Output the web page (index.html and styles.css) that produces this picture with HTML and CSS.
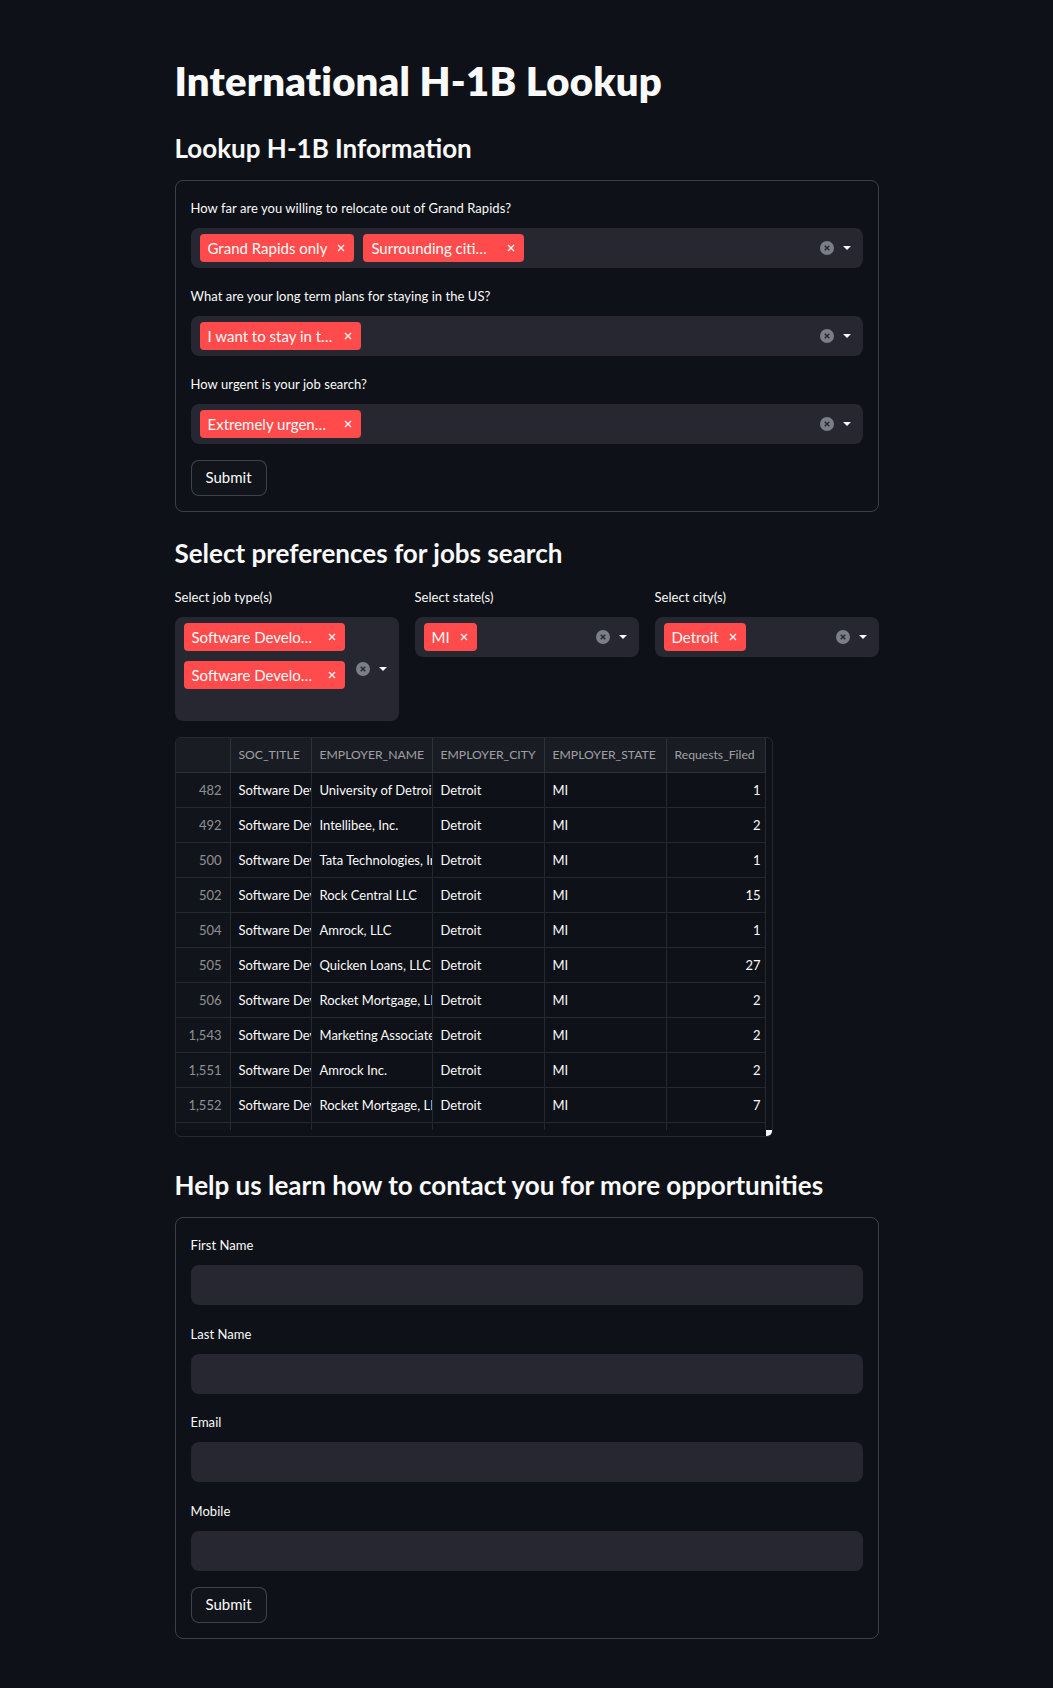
FILE: index.html
```html
<!DOCTYPE html>
<html lang="en">
<head>
<meta charset="utf-8">
<title>International H-1B Lookup</title>
<link rel="stylesheet" href="styles.css">
</head>
<body>
<main class="page">
  <h1 class="title">International H-1B Lookup</h1>

  <h3 class="subhead sh-lookup">Lookup H-1B Information</h3>
  <form class="st-form">
    <div class="field">
      <label class="field-label">How far are you willing to relocate out of Grand Rapids?</label>
      <div class="multiselect">
        <div class="ms-values">
          <span class="chip"><span class="chip-text">Grand Rapids only</span><svg class="chip-x" viewBox="0 0 8 8"><path d="M1 1L7 7M7 1L1 7"/></svg></span>
          <span class="chip"><span class="chip-text trunc">Surrounding citi…</span><svg class="chip-x" viewBox="0 0 8 8"><path d="M1 1L7 7M7 1L1 7"/></svg></span>
          <span class="ms-input"></span>
        </div>
        <div class="ms-indicators">
          <svg class="clear-icon" viewBox="0 0 14 14"><circle cx="7" cy="7" r="7"/><path d="M4.7 4.7L9.3 9.3M9.3 4.7L4.7 9.3"/></svg>
          <svg class="arrow-icon" viewBox="0 0 8 4"><path d="M0 0H8L4 4Z"/></svg>
        </div>
      </div>
    </div>
    <div class="field">
      <label class="field-label">What are your long term plans for staying in the US?</label>
      <div class="multiselect">
        <div class="ms-values">
          <span class="chip"><span class="chip-text trunc">I want to stay in t…</span><svg class="chip-x" viewBox="0 0 8 8"><path d="M1 1L7 7M7 1L1 7"/></svg></span>
          <span class="ms-input"></span>
        </div>
        <div class="ms-indicators">
          <svg class="clear-icon" viewBox="0 0 14 14"><circle cx="7" cy="7" r="7"/><path d="M4.7 4.7L9.3 9.3M9.3 4.7L4.7 9.3"/></svg>
          <svg class="arrow-icon" viewBox="0 0 8 4"><path d="M0 0H8L4 4Z"/></svg>
        </div>
      </div>
    </div>
    <div class="field">
      <label class="field-label">How urgent is your job search?</label>
      <div class="multiselect">
        <div class="ms-values">
          <span class="chip"><span class="chip-text trunc">Extremely urgen…</span><svg class="chip-x" viewBox="0 0 8 8"><path d="M1 1L7 7M7 1L1 7"/></svg></span>
          <span class="ms-input"></span>
        </div>
        <div class="ms-indicators">
          <svg class="clear-icon" viewBox="0 0 14 14"><circle cx="7" cy="7" r="7"/><path d="M4.7 4.7L9.3 9.3M9.3 4.7L4.7 9.3"/></svg>
          <svg class="arrow-icon" viewBox="0 0 8 4"><path d="M0 0H8L4 4Z"/></svg>
        </div>
      </div>
    </div>
    <button class="st-btn" type="button">Submit</button>
  </form>

  <h3 class="subhead sh-prefs">Select preferences for jobs search</h3>
  <div class="columns">
    <div class="field">
      <label class="field-label">Select job type(s)</label>
      <div class="multiselect">
        <div class="ms-values">
          <span class="chip"><span class="chip-text trunc">Software Develo…</span><svg class="chip-x" viewBox="0 0 8 8"><path d="M1 1L7 7M7 1L1 7"/></svg></span>
          <span class="chip"><span class="chip-text trunc">Software Develo…</span><svg class="chip-x" viewBox="0 0 8 8"><path d="M1 1L7 7M7 1L1 7"/></svg></span>
          <span class="ms-input"></span>
        </div>
        <div class="ms-indicators">
          <svg class="clear-icon" viewBox="0 0 14 14"><circle cx="7" cy="7" r="7"/><path d="M4.7 4.7L9.3 9.3M9.3 4.7L4.7 9.3"/></svg>
          <svg class="arrow-icon" viewBox="0 0 8 4"><path d="M0 0H8L4 4Z"/></svg>
        </div>
      </div>
    </div>
    <div class="field">
      <label class="field-label">Select state(s)</label>
      <div class="multiselect">
        <div class="ms-values">
          <span class="chip"><span class="chip-text">MI</span><svg class="chip-x" viewBox="0 0 8 8"><path d="M1 1L7 7M7 1L1 7"/></svg></span>
          <span class="ms-input"></span>
        </div>
        <div class="ms-indicators">
          <svg class="clear-icon" viewBox="0 0 14 14"><circle cx="7" cy="7" r="7"/><path d="M4.7 4.7L9.3 9.3M9.3 4.7L4.7 9.3"/></svg>
          <svg class="arrow-icon" viewBox="0 0 8 4"><path d="M0 0H8L4 4Z"/></svg>
        </div>
      </div>
    </div>
    <div class="field">
      <label class="field-label">Select city(s)</label>
      <div class="multiselect">
        <div class="ms-values">
          <span class="chip"><span class="chip-text">Detroit</span><svg class="chip-x" viewBox="0 0 8 8"><path d="M1 1L7 7M7 1L1 7"/></svg></span>
          <span class="ms-input"></span>
        </div>
        <div class="ms-indicators">
          <svg class="clear-icon" viewBox="0 0 14 14"><circle cx="7" cy="7" r="7"/><path d="M4.7 4.7L9.3 9.3M9.3 4.7L4.7 9.3"/></svg>
          <svg class="arrow-icon" viewBox="0 0 8 4"><path d="M0 0H8L4 4Z"/></svg>
        </div>
      </div>
    </div>
  </div>

  <div class="dataframe">
    <div class="df-viewport">
      <div class="df-grid">
        <div class="hd idx"></div><div class="hd">SOC_TITLE</div><div class="hd">EMPLOYER_NAME</div><div class="hd">EMPLOYER_CITY</div><div class="hd">EMPLOYER_STATE</div><div class="hd">Requests_Filed</div>

        <div class="cell idx">482</div><div class="cell">Software Developers</div><div class="cell">University of Detroit Mercy</div><div class="cell">Detroit</div><div class="cell">MI</div><div class="cell num">1</div>
        <div class="cell idx">492</div><div class="cell">Software Developers</div><div class="cell">Intellibee, Inc.</div><div class="cell">Detroit</div><div class="cell">MI</div><div class="cell num">2</div>
        <div class="cell idx">500</div><div class="cell">Software Developers</div><div class="cell">Tata Technologies, Inc.</div><div class="cell">Detroit</div><div class="cell">MI</div><div class="cell num">1</div>
        <div class="cell idx">502</div><div class="cell">Software Developers</div><div class="cell">Rock Central LLC</div><div class="cell">Detroit</div><div class="cell">MI</div><div class="cell num">15</div>
        <div class="cell idx">504</div><div class="cell">Software Developers</div><div class="cell">Amrock, LLC</div><div class="cell">Detroit</div><div class="cell">MI</div><div class="cell num">1</div>
        <div class="cell idx">505</div><div class="cell">Software Developers</div><div class="cell">Quicken Loans, LLC</div><div class="cell">Detroit</div><div class="cell">MI</div><div class="cell num">27</div>
        <div class="cell idx">506</div><div class="cell">Software Developers</div><div class="cell">Rocket Mortgage, LLC</div><div class="cell">Detroit</div><div class="cell">MI</div><div class="cell num">2</div>
        <div class="cell idx">1,543</div><div class="cell">Software Developers</div><div class="cell">Marketing Associates, LLC</div><div class="cell">Detroit</div><div class="cell">MI</div><div class="cell num">2</div>
        <div class="cell idx">1,551</div><div class="cell">Software Developers</div><div class="cell">Amrock Inc.</div><div class="cell">Detroit</div><div class="cell">MI</div><div class="cell num">2</div>
        <div class="cell idx">1,552</div><div class="cell">Software Developers</div><div class="cell">Rocket Mortgage, LLC</div><div class="cell">Detroit</div><div class="cell">MI</div><div class="cell num">7</div>
        <div class="cell idx"></div><div class="cell"></div><div class="cell"></div><div class="cell"></div><div class="cell"></div><div class="cell num"></div>
      </div>
    </div>
    <span class="df-resize"></span>
  </div>

  <h3 class="subhead sh-contact">Help us learn how to contact you for more opportunities</h3>
  <form class="st-form contact-form">
    <div class="field">
      <label class="field-label" for="fn">First Name</label>
      <input class="text-input" id="fn" type="text">
    </div>
    <div class="field">
      <label class="field-label" for="ln">Last Name</label>
      <input class="text-input" id="ln" type="text">
    </div>
    <div class="field">
      <label class="field-label" for="em">Email</label>
      <input class="text-input" id="em" type="text">
    </div>
    <div class="field">
      <label class="field-label" for="mo">Mobile</label>
      <input class="text-input" id="mo" type="text">
    </div>
    <button class="st-btn" type="button">Submit</button>
  </form>
</main>
</body>
</html>
```

FILE: styles.css
```css
* { box-sizing: border-box; }

html, body {
  margin: 0;
  padding: 0;
  background: #0e1117;
  color: #fafafa;
  font-family: "Lato", "Liberation Sans", sans-serif;
}

.page {
  width: 704px;
  margin: 0 auto;
  padding: 55px 0 40px;
}

.title {
  margin: 0;
  font-size: 40px;
  line-height: 52px;
  font-weight: 800;
  letter-spacing: 0.2px;
}

.subhead {
  margin: 0;
  font-size: 26px;
  line-height: 36px;
  font-weight: 700;
  letter-spacing: 0;
}

.sh-lookup { margin-top: 23px; margin-bottom: 14px; }
.sh-prefs { margin-top: 23px; margin-bottom: 14px; }
.sh-contact { margin-top: 30px; margin-bottom: 14px; }

.st-form {
  border: 1px solid rgba(250, 250, 250, 0.2);
  border-radius: 8px;
  padding: 15px;
  display: flex;
  flex-direction: column;
  gap: 16px;
  align-items: flex-start;
}

.contact-form { gap: 16.5px; }

.field {
  display: flex;
  flex-direction: column;
  gap: 8px;
  width: 100%;
}

.field-label {
  font-size: 13px;
  line-height: 24px;
  height: 24px;
  color: #fafafa;
  letter-spacing: 0.05px;
}

.multiselect {
  display: flex;
  align-items: center;
  background: #262730;
  border-radius: 8px;
  min-height: 40px;
}

.ms-values {
  flex: 1;
  min-width: 0;
  display: flex;
  flex-wrap: wrap;
  align-items: center;
  row-gap: 10px;
  column-gap: 9px;
  padding: 6px 0 6px 9px;
}

.chip {
  display: inline-flex;
  align-items: center;
  gap: 10px;
  height: 28px;
  padding: 0 9px 0 8px;
  background: #ff4b4b;
  border-radius: 4px;
  color: #fafafa;
  font-size: 15px;
  white-space: nowrap;
}

.chip-text.trunc {
  min-width: 126px;
}

.chip-x {
  width: 8px;
  height: 8px;
  fill: none;
  stroke: #fafafa;
  stroke-width: 1.3;
}

.ms-input {
  width: 2px;
  height: 16px;
}

.ms-indicators {
  display: flex;
  align-items: center;
  gap: 9px;
  padding: 0 12px 0 6px;
}

.clear-icon {
  width: 14px;
  height: 14px;
}
.clear-icon circle { fill: #7c7e87; }
.clear-icon path { stroke: #262730; stroke-width: 1.4; fill: none; }

.arrow-icon {
  width: 8px;
  height: 4px;
  fill: #fafafa;
}

.st-btn {
  font-family: inherit;
  font-size: 15px;
  line-height: 25.6px;
  color: #fafafa;
  background: #11141b;
  border: 1px solid rgba(250, 250, 250, 0.2);
  border-radius: 8px;
  padding: 4px 14px;
  height: 36px;
}

.columns {
  display: grid;
  grid-template-columns: repeat(3, 1fr);
  gap: 16px;
  align-items: start;
}

.dataframe {
  position: relative;
  margin-top: 16px;
  width: 598px;
  height: 400px;
  border: 1px solid rgba(250, 250, 250, 0.1);
  border-radius: 6px;
  padding: 0 6px 6px 0;
  overflow: hidden;
}

.df-viewport {
  height: 392px;
  overflow: hidden;
}

.df-grid {
  display: grid;
  grid-template-columns: 55px 81px 121px 112px 122px 99px;
  grid-auto-rows: 35px;
  font-size: 13px;
}

.hd, .cell {
  border-right: 1px solid rgba(250, 250, 250, 0.1);
  border-bottom: 1px solid rgba(250, 250, 250, 0.1);
  padding: 0 8px;
  white-space: nowrap;
  overflow: hidden;
  line-height: 34px;
}

.hd {
  background: #1a1c23;
  color: rgba(250, 250, 250, 0.6);
  font-size: 12.2px;
}

.cell.idx {
  text-align: right;
  color: rgba(250, 250, 250, 0.55);
  background: #11141a;
}

.cell.num {
  text-align: right;
  padding-right: 4px;
}

.df-resize {
  position: absolute;
  right: 0;
  bottom: 0;
  width: 6px;
  height: 6px;
  background: #fafafa;
}

.text-input {
  display: block;
  width: 100%;
  height: 40px;
  border: none;
  border-radius: 8px;
  background: #262730;
  color: #fafafa;
  font-family: inherit;
  font-size: 15px;
  padding: 0 12px;
  outline: none;
}
```
